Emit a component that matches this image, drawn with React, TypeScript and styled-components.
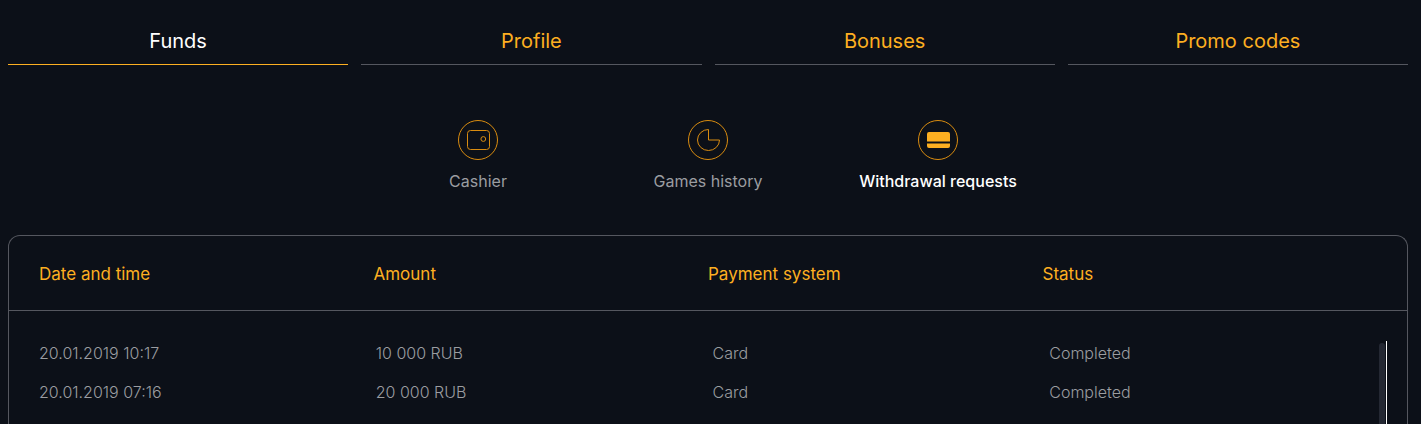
import React from "react";
import styled, { createGlobalStyle } from "styled-components";

const GlobalStyle = createGlobalStyle`
  *, *::before, *::after { box-sizing: border-box; }
  body {
    margin: 0;
    background: #0c1018;
    color: #9b9da1;
    font-family: Inter, "Liberation Sans", sans-serif;
  }
`;

const Page = styled.main`
  display: flex;
  flex-direction: column;
  min-height: 100vh;
  padding: 16px 13px 0 8px;
`;

const Tabs = styled.nav`
  display: grid;
  grid-template-columns: repeat(4, 1fr);
  gap: 13px;
`;

const Tab = styled.a<{ $active?: boolean }>`
  height: 49px;
  border-bottom: 1px solid ${(p) => (p.$active ? "#fdaf21" : "#55575f")};
  color: ${(p) => (p.$active ? "#ffffff" : "#fdaf21")};
  font-size: 20px;
  font-weight: 400;
  line-height: 50px;
  text-align: center;
  text-decoration: none;
`;

const Sections = styled.nav`
  display: flex;
  justify-content: center;
  margin: 55px 0 42px;
`;

const Section = styled.a<{ $active?: boolean }>`
  display: flex;
  flex-direction: column;
  align-items: center;
  gap: 9px;
  width: 230px;
  color: ${(p) => (p.$active ? "#ffffff" : "#9b9da1")};
  font-size: 16px;
  font-weight: ${(p) => (p.$active ? 500 : 400)};
  line-height: 24px;
  text-decoration: none;
`;

const Icon = styled.svg`
  width: 40px;
  height: 40px;
  fill: none;
  stroke: #d98c10;
`;

const Card = styled.section`
  flex: 1;
  display: flex;
  border: 1px solid #55575f;
  border-bottom: 0;
  border-radius: 12px 12px 0 0;
`;

const Table = styled.table`
  flex: 1;
  display: flex;
  flex-direction: column;
`;

const Head = styled.thead`
  display: block;
  padding: 2px 30px 0;
  border-bottom: 1px solid #55575f;
`;

const Body = styled.tbody`
  display: block;
  flex: 1;
  position: relative;
  margin: 30px 20px 0 30px;
  border-right: 1px solid #ffffff;

  &::after {
    content: "";
    position: absolute;
    top: 2px;
    right: 1px;
    bottom: 0;
    width: 6px;
    border-radius: 3px 3px 0 0;
    background: #242833;
  }
`;

const Row = styled.tr`
  display: grid;
  grid-template-columns: repeat(4, 1fr);
`;

const HeadCell = styled.th`
  padding: 0;
  color: #fdaf21;
  font-size: 17px;
  font-weight: 400;
  line-height: 72px;
  text-align: left;
`;

const Cell = styled.td`
  padding: 0 0 15px;
  font-size: 16px;
  font-weight: 300;
  line-height: 24px;
`;

const tabs = ["Funds", "Profile", "Bonuses", "Promo codes"];
const columns = ["Date and time", "Amount", "Payment system", "Status"];
const requests = [
  ["20.01.2019 10:17", "10 000 RUB", "Card", "Completed"],
  ["20.01.2019 07:16", "20 000 RUB", "Card", "Completed"],
];

const Ring = () => <circle cx="20" cy="20" r="19.5" />;

export default function App() {
  return (
    <>
      <GlobalStyle />
      <Page>
        <Tabs aria-label="Account">
          {tabs.map((tab, i) => (
            <Tab key={tab} href="#" $active={i === 0}>{tab}</Tab>
          ))}
        </Tabs>
        <Sections aria-label="Funds">
          <Section href="#">
            <Icon viewBox="0 0 40 40" aria-hidden="true">
              <Ring />
              <rect x="9.5" y="10.5" width="22" height="19" rx="3" />
              <circle cx="25.3" cy="19" r="2.4" />
            </Icon>
            Cashier
          </Section>
          <Section href="#">
            <Icon viewBox="0 0 40 40" aria-hidden="true">
              <Ring />
              <path d="M20.5 9.5A11 10.5 0 1 0 31.5 20H20.5Z" />
            </Icon>
            Games history
          </Section>
          <Section href="#" $active>
            <Icon viewBox="0 0 40 40" aria-hidden="true">
              <Ring />
              <path
                d="M9 21.5V14a2 2 0 0 1 2-2H30a2 2 0 0 1 2 2V21.5ZM9 23.5H32V26a2 2 0 0 1-2 2H11a2 2 0 0 1-2-2Z"
                fill="#fdaf21"
                stroke="none"
              />
            </Icon>
            Withdrawal requests
          </Section>
        </Sections>
        <Card>
          <Table>
            <Head>
              <Row>
                {columns.map((name) => (
                  <HeadCell key={name} scope="col">{name}</HeadCell>
                ))}
              </Row>
            </Head>
            <Body>
              {requests.map((request) => (
                <Row key={request[0]}>
                  {request.map((value, i) => (
                    <Cell key={columns[i]}>{value}</Cell>
                  ))}
                </Row>
              ))}
            </Body>
          </Table>
        </Card>
      </Page>
    </>
  );
}
